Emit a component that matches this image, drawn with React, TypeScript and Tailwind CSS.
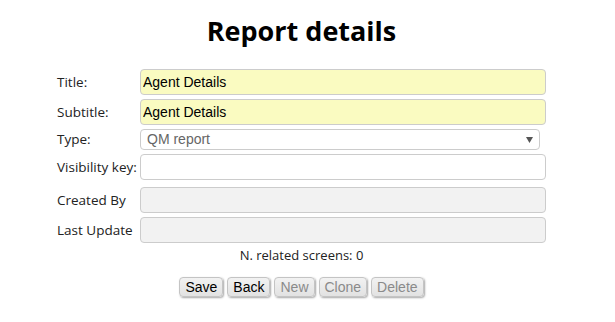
const inputBase =
  'h-[26px] rounded-[4px] border border-[#cccccc] px-[2px] text-[14px] text-black outline-none';

function Row({ label, children, className = '' }: { label: string; children: React.ReactNode; className?: string }) {
  return (
    <div className={'flex items-center ' + className}>
      <label className="w-[83px] shrink-0 text-[13.5px] text-[#222]">{label}</label>
      {children}
    </div>
  );
}

function Btn({ children, disabled }: { children: React.ReactNode; disabled?: boolean }) {
  return (
    <button
      disabled={disabled}
      className={
        'h-[20px] rounded-[4px] border border-[#c4c4c4] bg-gradient-to-b from-[#f2f2f2] to-[#e2e2e2] px-[5px] text-[14px] leading-[18px] shadow-[1px_1px_2px_rgba(0,0,0,0.35)] ' +
        (disabled ? 'text-[#8a8a8a]' : 'text-black')
      }
    >
      {children}
    </button>
  );
}

export default function App() {
  return (
    <div className="min-h-[322px] bg-white font-['Liberation_Sans',Arial,sans-serif]">
      <div className="ml-[57px] w-[489px] pt-[13px]">
        <h1 className="text-center font-['Open_Sans',sans-serif] text-[27px] font-bold leading-[36px] text-black">
          Report details
        </h1>
        <div className="mt-[20px] flex flex-col gap-[4px] font-['Open_Sans',sans-serif]">
          <Row label="Title:">
            <input
              className={inputBase + " flex-1 bg-[#fafbc1] font-['Liberation_Sans',Arial,sans-serif]"}
              defaultValue="Agent Details"
            />
          </Row>
          <Row label="Subtitle:">
            <input
              className={inputBase + " flex-1 bg-[#fafbc1] font-['Liberation_Sans',Arial,sans-serif]"}
              defaultValue="Agent Details"
            />
          </Row>
          <Row label="Type:">
            <div className="relative mr-[6px] flex h-[21px] flex-1 items-center rounded-[4px] border border-[#cccccc] bg-white pl-[6px] font-['Liberation_Sans',Arial,sans-serif] text-[14px] text-[#666]">
              QM report
              <svg className="absolute right-[6px] top-[7px]" width="7" height="6" viewBox="0 0 7 6">
                <path d="M0 0H7L3.5 6Z" fill="#555" />
              </svg>
            </div>
          </Row>
          <Row label="Visibility key:">
            <input className={inputBase + ' flex-1 bg-white'} />
          </Row>
          <Row label="Created By" className="mt-[3px]">
            <input disabled className={inputBase + ' flex-1 bg-[#f2f2f2]'} />
          </Row>
          <Row label="Last Update">
            <input disabled className={inputBase + ' flex-1 bg-[#f2f2f2]'} />
          </Row>
        </div>
        <p className="mt-[2px] text-center font-['Open_Sans',sans-serif] text-[13px] leading-[20px] text-[#222]">
          N. related screens: 0
        </p>
        <div className="mt-[12px] flex justify-center gap-[4px]">
          <Btn>Save</Btn>
          <Btn>Back</Btn>
          <Btn disabled>New</Btn>
          <Btn disabled>Clone</Btn>
          <Btn disabled>Delete</Btn>
        </div>
      </div>
    </div>
  );
}
